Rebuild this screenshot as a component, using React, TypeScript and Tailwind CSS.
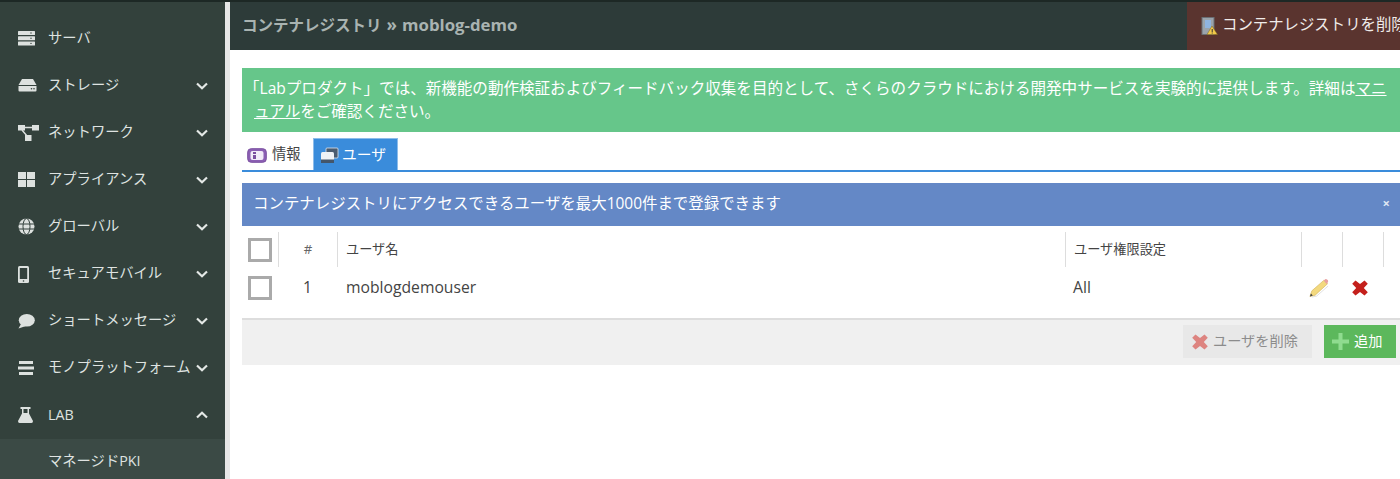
import React from "react";

const font = { fontFamily: '"Open Sans", "Noto Sans CJK JP", "Liberation Sans", sans-serif' };

const Chevron = ({ up }: { up?: boolean }) => (
  <svg width="12" height="8" viewBox="0 0 12 8" fill="none" stroke="#e4e8e6" strokeWidth="2.2">
    <path d={up ? "M1 6.5 L6 1.8 L11 6.5" : "M1 1.5 L6 6.2 L11 1.5"} />
  </svg>
);

const IServer = () => (
  <svg width="18" height="15" viewBox="0 0 18 15" fill="#dde1df">
    <rect x="0" y="0" width="17" height="4" rx="0.5" />
    <rect x="0" y="5.2" width="17" height="4" rx="0.5" />
    <rect x="0" y="10.4" width="17" height="4" rx="0.5" />
    <circle cx="13" cy="2" r="0.7" fill="#33413c" /><circle cx="13" cy="7.2" r="0.7" fill="#33413c" /><circle cx="13" cy="12.4" r="0.7" fill="#33413c" />
  </svg>
);
const IDisk = () => (
  <svg width="19" height="13" viewBox="0 0 19 13" fill="#dde1df">
    <path d="M4 0 H15 L18.500 6 H0.500 Z" />
    <path d="M0.500 7 H18.500 V11.500 Q18.500 12.500 17.500 12.500 H1.500 Q0.500 12.500 0.500 11.500 Z" />
    <circle cx="13.500" cy="9.700" r="0.800" fill="#33413c" /><circle cx="16" cy="9.700" r="0.800" fill="#33413c" />
  </svg>
);
const INet = () => (
  <svg width="21" height="16" viewBox="0 0 21 16" fill="#dde1df">
    <rect x="0" y="0" width="7" height="5.500" /><rect x="14" y="0" width="7" height="5.500" /><rect x="7" y="10" width="6.500" height="6" />
    <path d="M6 2.500 H15 M4 5 L9 11" stroke="#dde1df" strokeWidth="1.400" />
  </svg>
);
const IGrid = () => (
  <svg width="17" height="15" viewBox="0 0 17 15" fill="#dde1df">
    <rect x="0" y="0" width="8" height="7" /><rect x="9" y="0" width="8" height="7" /><rect x="0" y="8" width="8" height="7" /><rect x="9" y="8" width="8" height="7" />
  </svg>
);
const IGlobe = () => (
  <svg width="17" height="17" viewBox="0 0 17 17" fill="none">
    <circle cx="8.500" cy="8.500" r="8" fill="#dde1df" />
    <g stroke="#33413c" strokeWidth="1"><ellipse cx="8.500" cy="8.500" rx="3.500" ry="8" /><path d="M1 6 H16 M1 11 H16" /></g>
  </svg>
);
const IPhone = () => (
  <svg width="11" height="17" viewBox="0 0 11 17">
    <rect x="0" y="0" width="11" height="17" rx="1.500" fill="#dde1df" />
    <rect x="1.800" y="2" width="7.400" height="11" fill="#33413c" />
    <circle cx="5.500" cy="15" r="0.800" fill="#33413c" />
  </svg>
);
const IChat = () => (
  <svg width="17" height="15" viewBox="0 0 17 15" fill="#dde1df">
    <ellipse cx="8.800" cy="6.300" rx="8" ry="6.300" />
    <path d="M3 10 L0.500 14.500 L8 12 Z" />
  </svg>
);
const IBars = () => (
  <svg width="17" height="14" viewBox="0 0 17 14" fill="#dde1df">
    <rect x="1" y="0" width="14" height="3" /><rect x="0" y="5.500" width="16" height="3" /><rect x="1" y="11" width="14" height="3" />
  </svg>
);
const IFlask = () => (
  <svg width="15" height="16" viewBox="0 0 15 16" fill="#dde1df">
    <rect x="2.500" y="0" width="10" height="2" />
    <path d="M4 2 H11 V6.500 L15 14 Q15 16 13.500 16 H1.500 Q0 16 0 14 L4 6.500 Z" />
    <rect x="5.500" y="2" width="4" height="4" fill="#33413c" />
  </svg>
);

const menu: { label: string; icon: React.ReactNode; chevron?: "down" | "up" }[] = [
  { label: "サーバ", icon: <IServer /> },
  { label: "ストレージ", icon: <IDisk />, chevron: "down" },
  { label: "ネットワーク", icon: <INet />, chevron: "down" },
  { label: "アプライアンス", icon: <IGrid />, chevron: "down" },
  { label: "グローバル", icon: <IGlobe />, chevron: "down" },
  { label: "セキュアモバイル", icon: <IPhone />, chevron: "down" },
  { label: "ショートメッセージ", icon: <IChat />, chevron: "down" },
  { label: "モノプラットフォーム", icon: <IBars />, chevron: "down" },
  { label: "LAB", icon: <IFlask />, chevron: "up" },
];

const Sidebar = () => (
  <div className="w-[225px] shrink-0 bg-[#33413c] pt-[13px] flex flex-col overflow-hidden">
    {menu.map((m) => (
      <div key={m.label} className="h-[47.100px] shrink-0 flex items-center pl-[18px] pr-[17px] text-[14.300px] text-[#dfe3e1]">
        <span className="w-[30px] shrink-0 flex items-center">{m.icon}</span>
        <span className="flex-1 whitespace-nowrap pb-[2px]">{m.label}</span>
        {m.chevron && <Chevron up={m.chevron === "up"} />}
      </div>
    ))}
    <div className="h-[41px] shrink-0 bg-[#3b4a45] flex items-center pl-[48px] pt-[2px] text-[14.300px] text-[#dfe3e1]">マネージドPKI</div>
  </div>
);

const Check = () => <div className="w-[24px] h-[24px] border-[3px] border-[#aaaaaa] bg-white" />;

const Pencil = () => (
  <svg width="20" height="20" viewBox="0 0 21 20">
    <path d="M1 19 L3 13 L15.500 2 L19.500 5.500 L6.500 17.500 Z" fill="#f3d97e" stroke="#cfae55" strokeWidth="0.600" />
    <path d="M15.500 2 L17 0.700 Q18 0.300 19 1 L20 2.200 Q20.500 3.200 19.500 4.500 L18.500 5.800 Z" fill="#e9a0a0" />
    <path d="M1 19 L2 15.800 L4 18 Z" fill="#444" />
    <path d="M3 19.500 L8 18.500 L20 8" stroke="#d8d8d8" strokeWidth="0.800" fill="none" />
  </svg>
);
const RedX = ({ color = "#c4201c", size = 16 }: { color?: string; size?: number }) => (
  <svg width={size} height={size} viewBox="0 0 16 16">
    <path d="M3.500 0.500 L8 4 L12.500 0.500 L15.800 3.800 L11.800 8 L15.800 12.200 L12.500 15.500 L8 12 L3.500 15.500 L0.200 12.200 L4.200 8 L0.200 3.800 Z" fill={color} />
  </svg>
);

const Header = () => (
  <div className="h-[48px] shrink-0 bg-[#2d3b39] flex items-center justify-between">
    <div className="pl-[12px] text-[15.500px] font-bold text-[#a9b3b1] whitespace-nowrap pb-[2px]">
      コンテナレジストリ <span className="text-[17px] mx-[1px]">»</span> <span className="text-[16.800px]">moblog-demo</span>
    </div>
    <div className="w-[213px] h-full shrink-0 bg-[#5a342f] flex items-center pl-[14px] gap-[4px] text-[15.400px] text-[#f0ecea] overflow-hidden whitespace-nowrap">
      <svg width="17" height="18" viewBox="0 0 17 18" className="shrink-0">
        <rect x="1" y="0.500" width="12" height="17" fill="#9aa3ab" stroke="#6a6f75" />
        <rect x="4" y="3" width="6" height="8" fill="#8fb4e0" />
        <path d="M11 9 L16.500 17.500 H6 Z" fill="#f2c94a" stroke="#7a6420" strokeWidth="0.500" />
        <rect x="10.700" y="12" width="1" height="3" fill="#333" /><rect x="10.700" y="15.500" width="1" height="1" fill="#333" />
      </svg>
      <span className="pb-[2px]">コンテナレジストリを削除</span>
    </div>
  </div>
);

const Tabs = () => (
  <div className="mt-[6px] h-[34px] border-b-2 border-[#3a8cdb] flex items-end text-[14.300px]">
    <div className="h-[32px] w-[71px] flex items-center pl-[5px] gap-[5px] text-[#444444]">
      <svg width="20" height="15" viewBox="0 0 20 15" className="mt-[2px]">
        <rect x="0.700" y="0.700" width="18.600" height="13.600" rx="3.500" fill="#8b5fb3" stroke="#7a4fa0" />
        <rect x="3.500" y="3" width="13" height="9" rx="2" fill="#f1ebf7" />
        <rect x="6" y="4" width="3" height="2" fill="#7a4fa0" /><rect x="6" y="7" width="3" height="4" fill="#7a4fa0" />
      </svg>
      <span className="pb-[1px]">情報</span>
    </div>
    <div className="h-[32px] w-[85px] bg-[#3a8cdb] border-t border-x border-[#8dbcea] flex items-center pl-[6px] gap-[3px] text-white text-[14.800px]">
      <svg width="19" height="17" viewBox="0 0 19 17" className="mt-[2px]">
        <rect x="6" y="1" width="12" height="10" rx="1" fill="#4a5c70" stroke="#dfe6ee" strokeWidth="0.800" />
        <rect x="1" y="5" width="13" height="11" rx="1.500" fill="#eef2f6" />
        <rect x="1" y="12.500" width="13" height="3.500" fill="#44566a" />
      </svg>
      <span className="pb-[1px]">ユーザ</span>
    </div>
  </div>
);

const Divider = "border-l border-[#dddddd]";

const Table = () => (
  <div className="text-[14px] text-[#444444]">
    <div className="mt-[6px] h-[35px] flex items-stretch text-[13.200px]">
      <div className="w-[36px] shrink-0 pl-[6px] flex items-center"><Check /></div>
      <div className={`w-[59px] shrink-0 flex items-center justify-center text-[#666666] ${Divider}`}>#</div>
      <div className={`w-[728px] shrink-0 pl-[8px] flex items-center ${Divider}`}>ユーザ名</div>
      <div className={`w-[236px] shrink-0 pl-[8px] flex items-center ${Divider}`}>ユーザ権限設定</div>
      <div className={`w-[41px] shrink-0 ${Divider}`} />
      <div className={`w-[41px] shrink-0 ${Divider}`} />
      <div className={`w-[16px] shrink-0 ${Divider}`} />
    </div>
    <div className="h-[41px] flex items-center text-[15.700px]">
      <div className="w-[36px] shrink-0 pl-[6px] flex items-center"><Check /></div>
      <div className="w-[59px] shrink-0 text-center">1</div>
      <div className="w-[728px] shrink-0 pl-[9px]">moblogdemouser</div>
      <div className="w-[236px] shrink-0 pl-[8px]">All</div>
      <div className="w-[41px] shrink-0 pl-[8px] flex items-center"><Pencil /></div>
      <div className="w-[41px] shrink-0 pl-[10px] flex items-center"><RedX /></div>
    </div>
  </div>
);

const Footer = () => (
  <div className="mt-[10px] h-[47px] bg-[#f0f0f0] border-t-2 border-[#dddddd] flex items-start pt-[5px] justify-end gap-[12px] pr-[4px] text-[14.200px]">
    <div className="w-[129px] h-[33px] bg-[#e8e8e8] flex items-center pl-[9px] gap-[5px] text-[#8c8c8c]">
      <RedX color="#dd8480" />
      <span className="pb-[2px]">ユーザを削除</span>
    </div>
    <div className="w-[72px] h-[33px] bg-[#5cb85c] flex items-center pl-[8px] gap-[5px] text-white">
      <svg width="17" height="17" viewBox="0 0 17 17"><path d="M6.500 0 H10.500 V6.500 H17 V10.500 H10.500 V17 H6.500 V10.500 H0 V6.500 H6.500 Z" fill="#8fdc8f" /></svg>
      <span className="pb-[2px]">追加</span>
    </div>
  </div>
);

export default function App() {
  return (
    <div className="w-[1400px] h-[479px] overflow-hidden flex flex-col bg-white" style={font}>
      <div className="h-[2px] shrink-0 bg-[#1d2825]" />
      <div className="flex-1 flex min-h-0">
        <Sidebar />
        <div className="w-[5px] shrink-0 bg-[#e6e6e6]" />
        <div className="flex-1 min-w-0 flex flex-col">
          <Header />
          <div className="pl-[12px] pt-[18px]">
            <div className="bg-[#66c68a] h-[64px] text-white text-[15.550px] leading-[23px] pl-[12px] indent-[-10px] pr-[8px] pt-[9px]">
              「Labプロダクト」では、新機能の動作検証およびフィードバック収集を目的として、さくらのクラウドにおける開発中サービスを実験的に提供します。詳細は<span className="underline">マニュアル</span>をご確認ください。
            </div>
            <Tabs />
            <div className="mt-[11px] h-[43px] bg-[#6488c6] flex items-center justify-between pl-[11px] pr-[10px] text-white text-[15.450px]">
              <span className="pb-[1px]">コンテナレジストリにアクセスできるユーザを最大1000件まで登録できます</span>
              <span className="text-[13px] font-bold text-[#dfe6f3] pb-[1px]">×</span>
            </div>
            <Table />
            <Footer />
          </div>
        </div>
      </div>
    </div>
  );
}
